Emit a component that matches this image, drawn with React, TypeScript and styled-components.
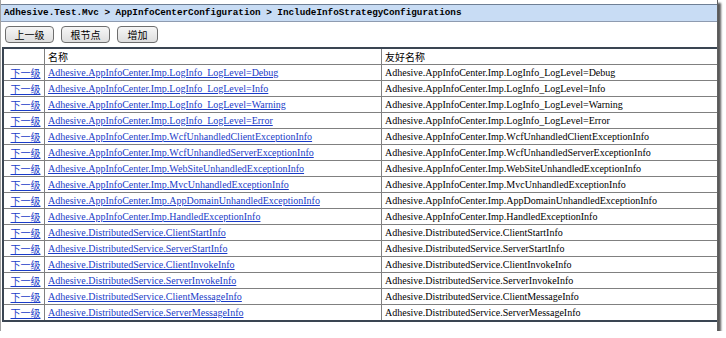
import React from 'react';
import styled, { createGlobalStyle } from 'styled-components';

const GlobalStyle = createGlobalStyle`
html, body {
    margin: 0;
    padding: 0;
    background: #ffffff;
}
`;

const Frame = styled.div`
width: 718px;
height: 331px;
border-left: 1px solid #a0a0a0;
border-right: 1px solid #606060;
box-shadow: 3px 3px 2px rgba(0, 0, 0, 0.65);
background: #ffffff;
overflow: hidden;
padding-top: 4px;
box-sizing: border-box;
`;

const PathBar = styled.div`
height: 16px;
line-height: 16px;
background: #c8dcf4;
border-top: 1px solid #6f7f94;
border-bottom: 1px solid #8e9bb0;
padding-left: 3px;
font-family: "Liberation Mono", "DejaVu Sans Mono", monospace;
font-weight: bold;
font-size: 9.3px;
color: #000000;
white-space: nowrap;
`;

const Toolbar = styled.div`
display: flex;
gap: 7px;
padding: 4px 0 0 4px;
height: 22px;
box-sizing: border-box;
align-items: flex-start;
`;

const ToolButton = styled.button<{ w: number }>`
width: ${({ w }) => w}px;
height: 17px;
padding: 0;
border: 1px solid #6e6e6e;
border-radius: 4px;
background: linear-gradient(#f6f6f6, #dedede);
font-family: "Noto Sans CJK SC", sans-serif;
font-size: 10px;
line-height: 14px;
color: #000000;
`;

const Grid = styled.table`
margin: 3px 0 0 1px;
border-collapse: collapse;
border: 2px solid #3a4552;
border-right: none;
table-layout: fixed;
width: 730px;
font-family: "Liberation Serif", "Noto Sans CJK SC", serif;
font-size: 10px;
`;

const HeadCell = styled.th<{ w: number }>`
width: ${({ w }) => w}px;
height: 14px;
padding: 0 0 0 3px;
text-align: left;
font-weight: normal;
font-family: "Noto Sans CJK SC", sans-serif;
font-size: 10px;
border: 1px solid #808080;
white-space: nowrap;
overflow: hidden;
`;

const Cell = styled.td<{ center?: boolean }>`
height: 15px;
padding: 0 0 0 3px;
border: 1px solid #808080;
white-space: nowrap;
overflow: hidden;
text-align: ${({ center }) => (center ? 'center' : 'left')};
`;

const Link = styled.a<{ cjk?: boolean }>`
color: #1a3cc8;
text-decoration: underline;
font-family: ${({ cjk }) => (cjk ? '"Noto Sans CJK SC", sans-serif' : '"Liberation Serif", serif')};
font-size: 10px;
`;

const Trail = styled.div`
height: 10px;
`;

const names = [
    'Adhesive.AppInfoCenter.Imp.LogInfo_LogLevel=Debug',
    'Adhesive.AppInfoCenter.Imp.LogInfo_LogLevel=Info',
    'Adhesive.AppInfoCenter.Imp.LogInfo_LogLevel=Warning',
    'Adhesive.AppInfoCenter.Imp.LogInfo_LogLevel=Error',
    'Adhesive.AppInfoCenter.Imp.WcfUnhandledClientExceptionInfo',
    'Adhesive.AppInfoCenter.Imp.WcfUnhandledServerExceptionInfo',
    'Adhesive.AppInfoCenter.Imp.WebSiteUnhandledExceptionInfo',
    'Adhesive.AppInfoCenter.Imp.MvcUnhandledExceptionInfo',
    'Adhesive.AppInfoCenter.Imp.AppDomainUnhandledExceptionInfo',
    'Adhesive.AppInfoCenter.Imp.HandledExceptionInfo',
    'Adhesive.DistributedService.ClientStartInfo',
    'Adhesive.DistributedService.ServerStartInfo',
    'Adhesive.DistributedService.ClientInvokeInfo',
    'Adhesive.DistributedService.ServerInvokeInfo',
    'Adhesive.DistributedService.ClientMessageInfo',
    'Adhesive.DistributedService.ServerMessageInfo',
];

export default function App() {
    return (
        <>
            <GlobalStyle />
            <Frame>
                <PathBar>Adhesive.Test.Mvc &gt; AppInfoCenterConfiguration &gt; IncludeInfoStrategyConfigurations</PathBar>
                <Toolbar>
                    <ToolButton w={49}>上一级</ToolButton>
                    <ToolButton w={49}>根节点</ToolButton>
                    <ToolButton w={41}>增加</ToolButton>
                </Toolbar>
                <Grid>
                    <thead>
                        <tr>
                            <HeadCell w={37}></HeadCell>
                            <HeadCell w={333}>名称</HeadCell>
                            <HeadCell w={333}>友好名称</HeadCell>
                            <HeadCell w={20}></HeadCell>
                        </tr>
                    </thead>
                    <tbody>
                        {names.map((n) => (
                            <tr key={n}>
                                <Cell center><Link cjk href="#">下一级</Link></Cell>
                                <Cell><Link href="#">{n}</Link></Cell>
                                <Cell>{n}</Cell>
                                <Cell></Cell>
                            </tr>
                        ))}
                    </tbody>
                </Grid>
                <Trail />
            </Frame>
        </>
    );
}
